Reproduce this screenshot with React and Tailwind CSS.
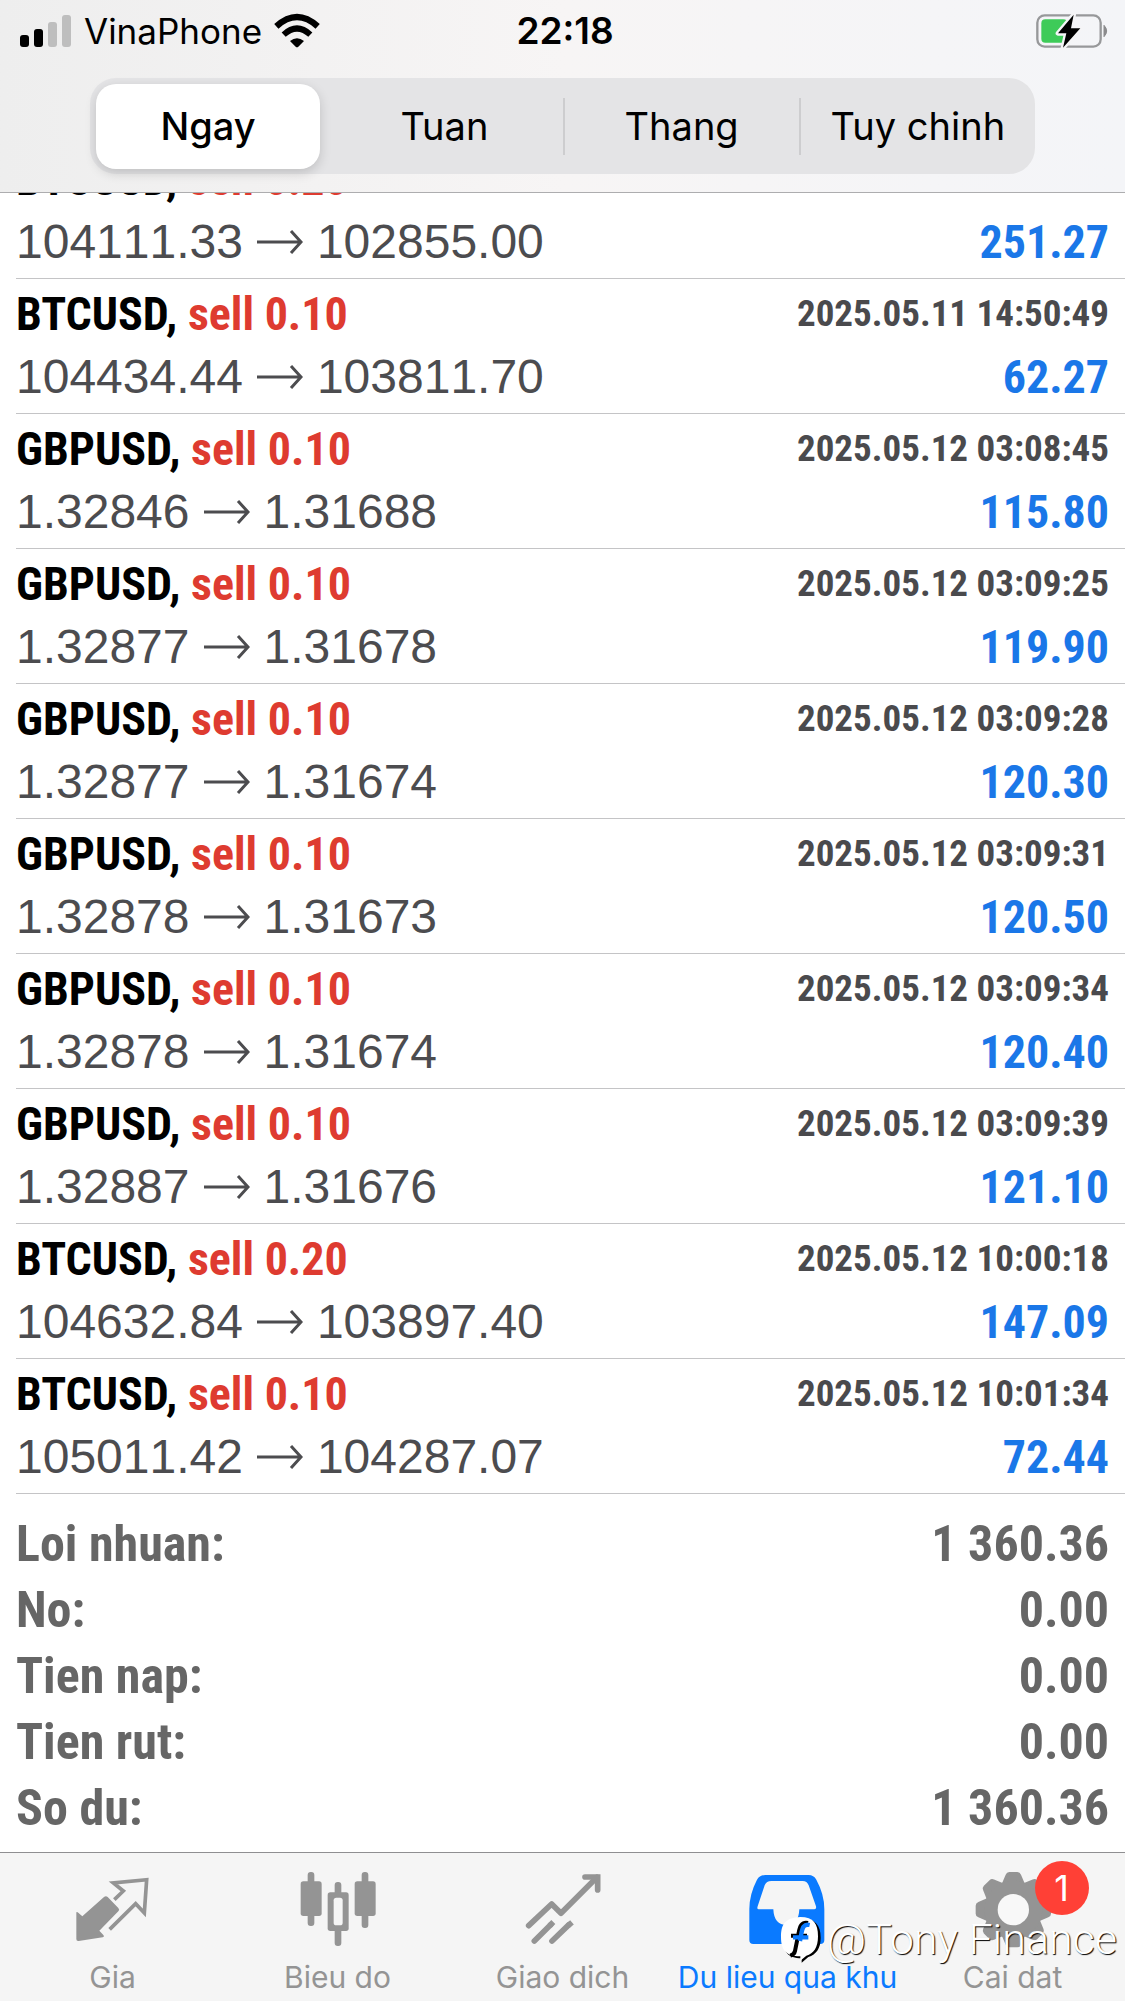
const deals = [
  { symbol: "BTCUSD", volume: "0.20", open: "104111.33", close: "102855.00", profit: "251.27" },
  { symbol: "BTCUSD", volume: "0.10", time: "2025.05.11 14:50:49", open: "104434.44", close: "103811.70", profit: "62.27" },
  { symbol: "GBPUSD", volume: "0.10", time: "2025.05.12 03:08:45", open: "1.32846", close: "1.31688", profit: "115.80" },
  { symbol: "GBPUSD", volume: "0.10", time: "2025.05.12 03:09:25", open: "1.32877", close: "1.31678", profit: "119.90" },
  { symbol: "GBPUSD", volume: "0.10", time: "2025.05.12 03:09:28", open: "1.32877", close: "1.31674", profit: "120.30" },
  { symbol: "GBPUSD", volume: "0.10", time: "2025.05.12 03:09:31", open: "1.32878", close: "1.31673", profit: "120.50" },
  { symbol: "GBPUSD", volume: "0.10", time: "2025.05.12 03:09:34", open: "1.32878", close: "1.31674", profit: "120.40" },
  { symbol: "GBPUSD", volume: "0.10", time: "2025.05.12 03:09:39", open: "1.32887", close: "1.31676", profit: "121.10" },
  { symbol: "BTCUSD", volume: "0.20", time: "2025.05.12 10:00:18", open: "104632.84", close: "103897.40", profit: "147.09" },
  { symbol: "BTCUSD", volume: "0.10", time: "2025.05.12 10:01:34", open: "105011.42", close: "104287.07", profit: "72.44" },
];

const summary = [
  ["Loi nhuan:", "1 360.36"],
  ["No:", "0.00"],
  ["Tien nap:", "0.00"],
  ["Tien rut:", "0.00"],
  ["So du:", "1 360.36"],
];

const periods = ["Ngay", "Tuan", "Thang", "Tuy chinh"];

function SignalIcon() {
  return (
    <svg className="h-8 w-[52px]" viewBox="0 0 52 32" fill="currentColor" aria-hidden="true">
      <rect x="0" y="20" width="9" height="12" rx="3" />
      <rect x="14" y="14" width="9" height="18" rx="3" />
      <rect x="28" y="7" width="9" height="25" rx="3" fill="#bebebe" />
      <rect x="42" y="0" width="9" height="32" rx="3" fill="#bebebe" />
    </svg>
  );
}

function WifiIcon() {
  return (
    <svg className="h-9 w-[46px]" viewBox="0 0 138 104" fill="none" stroke="currentColor" aria-hidden="true">
      <path d="M7 38Q69 -18 131 38" strokeWidth="19" />
      <path d="M29 63Q69 26 109 63" strokeWidth="18" />
      <path d="M48 82Q69 65 90 82L73 99Q69 103 65 99Z" fill="currentColor" stroke="none" />
    </svg>
  );
}

function BatteryIcon() {
  return (
    <svg className="h-9 w-[74px]" viewBox="0 0 222 108" aria-hidden="true">
      <rect x="4" y="7" width="190" height="94" rx="22" fill="none" stroke="#97989a" strokeWidth="7" />
      <path d="M204 37Q220 54 204 71Z" fill="#8b8b8d" stroke="#8b8b8d" strokeWidth="3" />
      <rect x="16" y="19" width="78" height="70" rx="12" fill="#3ecb59" />
      <path
        d="M113 5L66 61H91L81 104L133 46H105Z"
        fill="#000"
        stroke="#f5f5f7"
        strokeWidth="14"
        strokeLinejoin="round"
        paintOrder="stroke"
      />
    </svg>
  );
}

function QuotesIcon() {
  return (
    <>
      <path
        d="M10 131Q10 127 14 130L28 142L93 84Q99 79 104 84L136 117Q141 122 136 127L79 185L91 198Q95 203 89 205L17 216Q10 217 10 210Z"
        fill="currentColor"
      />
      <path d="M124 92L151 66L121 42L221 32L214 132L188 104L110 181" fill="none" stroke="currentColor" strokeWidth="11" />
    </>
  );
}

function ChartIcon() {
  return (
    <g fill="currentColor">
      <rect x="29" y="9" width="20" height="162" rx="9" />
      <rect x="8" y="37" width="63" height="104" rx="8" />
      <rect x="110" y="39" width="20" height="192" rx="9" />
      <rect x="89" y="70" width="63" height="116" rx="8" />
      <rect x="107" y="86" width="27" height="83" rx="8" fill="#f5f5f5" />
      <rect x="191" y="9" width="20" height="168" rx="9" />
      <rect x="170" y="37" width="63" height="104" rx="8" />
    </g>
  );
}

function TradeIcon() {
  return (
    <g fill="none" stroke="currentColor" strokeWidth="17" strokeLinecap="round">
      <path d="M17 170L86 105L114 133L222 25" strokeLinejoin="round" />
      <path d="M186 24H224V63" />
      <path d="M34 216L83 167" />
      <path d="M87 216L138 167" />
      <path d="M80 170L91 159M135 170L147 160" strokeLinecap="butt" />
    </g>
  );
}

function HistoryIcon() {
  return (
    <path
      fill="currentColor"
      fillRule="evenodd"
      d="M52 18H182Q197 18 205 32Q229 76 229 120V213Q229 225 217 225H16Q4 225 4 213V120Q4 76 27 32Q35 18 52 18ZM70 36H164Q177 36 182 49L204 112Q206 121 199 121H154Q152 168 116 168Q78 168 76 121H32Q26 121 29 112L50 49Q55 36 70 36Z"
    />
  );
}

function SettingsIcon() {
  return (
    <g fill="currentColor">
      {[0, 45, 90, 135, 180, 225, 270, 315].map((angle) => (
        <path key={angle} d="M84 50L98 17Q101 9 109 9H133Q141 9 144 17L158 50Z" transform={`rotate(${angle} 121 122)`} />
      ))}
      <circle cx="121" cy="122" r="87" />
      <circle cx="121" cy="122" r="47" fill="#f8f8f8" />
    </g>
  );
}

const tabs = [
  { label: "Gia", icon: QuotesIcon },
  { label: "Bieu do", icon: ChartIcon },
  { label: "Giao dich", icon: TradeIcon },
  { label: "Du lieu qua khu", icon: HistoryIcon, active: true },
  { label: "Cai dat", icon: SettingsIcon, badge: "1" },
];

function Header() {
  return (
    <header className="relative z-10 border-b border-[#adadaf] bg-gradient-to-r from-[#eeeeee] via-[#f7f5f5] to-[#f4f5f8] pb-[18px] font-[Inter,sans-serif] text-black">
      <div className="grid h-[62px] grid-cols-3 items-center pr-[15px] pl-5">
        <div className="flex items-center gap-3">
          <SignalIcon />
          <span className="text-[35px] leading-10">VinaPhone</span>
          <WifiIcon />
        </div>
        <time className="text-center text-[37px] leading-10 font-semibold">22:18</time>
        <div className="flex justify-end">
          <BatteryIcon />
        </div>
      </div>

      <div role="tablist" className="mx-auto mt-4 grid h-24 w-[84%] grid-cols-4 rounded-[26px] bg-[#e4e4e6]">
        {periods.map((period, index) => (
          <button
            key={period}
            type="button"
            role="tab"
            aria-selected={index === 0}
            className={
              index === 0
                ? "m-[6px] rounded-[20px] bg-white text-[38px] font-medium shadow-[0_4px_12px_rgba(0,0,0,0.16)]"
                : `my-5 text-[38px] whitespace-nowrap ${index > 1 ? "border-l-2 border-[#cdcdcf]" : ""}`
            }
          >
            {period}
          </button>
        ))}
      </div>
    </header>
  );
}

function DealRow({ deal }) {
  return (
    <li className="ml-4 border-b border-[#c4c4c6] py-1 pr-4">
      <div className="flex h-[62px] items-center justify-between text-[46px] font-bold">
        <h2 className="text-black">
          {deal.symbol}, <span className="text-[#de3b30]">sell {deal.volume}</span>
        </h2>
        {deal.time && <time className="text-[37px] text-[#4a4a4d]">{deal.time}</time>}
      </div>
      <div className="flex h-16 items-center justify-between">
        <p className="flex items-center gap-[14px] font-['Liberation_Sans',sans-serif] text-[48px] text-[#4c4c4f] [font-kerning:none]">
          <span>{deal.open}</span>
          <svg className="h-6 w-[46px]" viewBox="0 0 46 24" fill="none" stroke="currentColor" strokeWidth="3" aria-label="to">
            <path d="M0 12H44M34 1L44 12L34 23" />
          </svg>
          <span>{deal.close}</span>
        </p>
        <p className="text-[46px] font-bold text-[#1a77e8]">{deal.profit}</p>
      </div>
    </li>
  );
}

function TabBar() {
  return (
    <nav className="grid h-[149px] grid-cols-5 border-t border-[#8f8f91] bg-[#f5f5f5] pt-4 font-[Inter,sans-serif]">
      {tabs.map(({ label, icon: Icon, active, badge }) => (
        <a
          key={label}
          href="#"
          className={`flex flex-col items-center gap-2 ${active ? "text-[#0a7aff]" : "text-[#949494]"}`}
        >
          <span className="relative">
            <svg className="size-20" viewBox="0 0 240 240" aria-hidden="true">
              <Icon />
            </svg>
            {badge && (
              <span className="absolute -top-2 left-[62px] flex size-[54px] items-center justify-center rounded-full bg-[#ff4036] text-[36px] text-white">
                {badge}
              </span>
            )}
          </span>
          <span className="text-[30px] leading-10 whitespace-nowrap">{label}</span>
        </a>
      ))}
    </nav>
  );
}

function Watermark() {
  return (
    <div className="pointer-events-none absolute right-2 bottom-9 flex items-center gap-1 font-[Roboto,sans-serif] text-[43px] leading-[52px] font-light text-white [text-shadow:1px_1px_1px_#000]">
      <svg className="h-12 w-11" viewBox="0 0 132 144" aria-hidden="true">
        <path d="M66 10C108 10 125 30 125 68C125 100 112 118 88 126L68 143L68 130C26 130 12 110 12 70C12 30 26 12 66 10Z" fill="#000" />
        <path d="M64 6C104 6 117 26 117 64C117 98 104 116 82 122L64 137L64 124C20 124 6 104 6 66C6 24 22 8 64 6Z" fill="#fff" />
        <path d="M87 24C68 20 62 34 59 54L48 108Q46 118 34 122M36 62H84" fill="none" stroke="#000" strokeWidth="12" />
        <path d="M92 30C74 26 70 38 67 56L63 78M42 67H88" fill="none" stroke="#0a7aff" strokeWidth="13" />
      </svg>
      <span>@Tony Finance</span>
    </div>
  );
}

export default function App() {
  return (
    <div className="relative flex min-h-screen flex-col bg-white font-['Roboto_Condensed','Liberation_Sans',sans-serif]">
      <Header />
      <main className="flex-1 overflow-hidden">
        {/* the list is scrolled, so its first row sits partly under the header */}
        <ul className="-mt-[49px]">
          {deals.map((deal, index) => (
            <DealRow key={index} deal={deal} />
          ))}
        </ul>
        <dl className="px-4 pt-[17px] pb-[11px] text-[50px] leading-[66px] font-bold text-[#666]">
          {summary.map(([label, value]) => (
            <div key={label} className="flex justify-between">
              <dt>{label}</dt>
              <dd>{value}</dd>
            </div>
          ))}
        </dl>
      </main>
      <TabBar />
      <Watermark />
    </div>
  );
}
